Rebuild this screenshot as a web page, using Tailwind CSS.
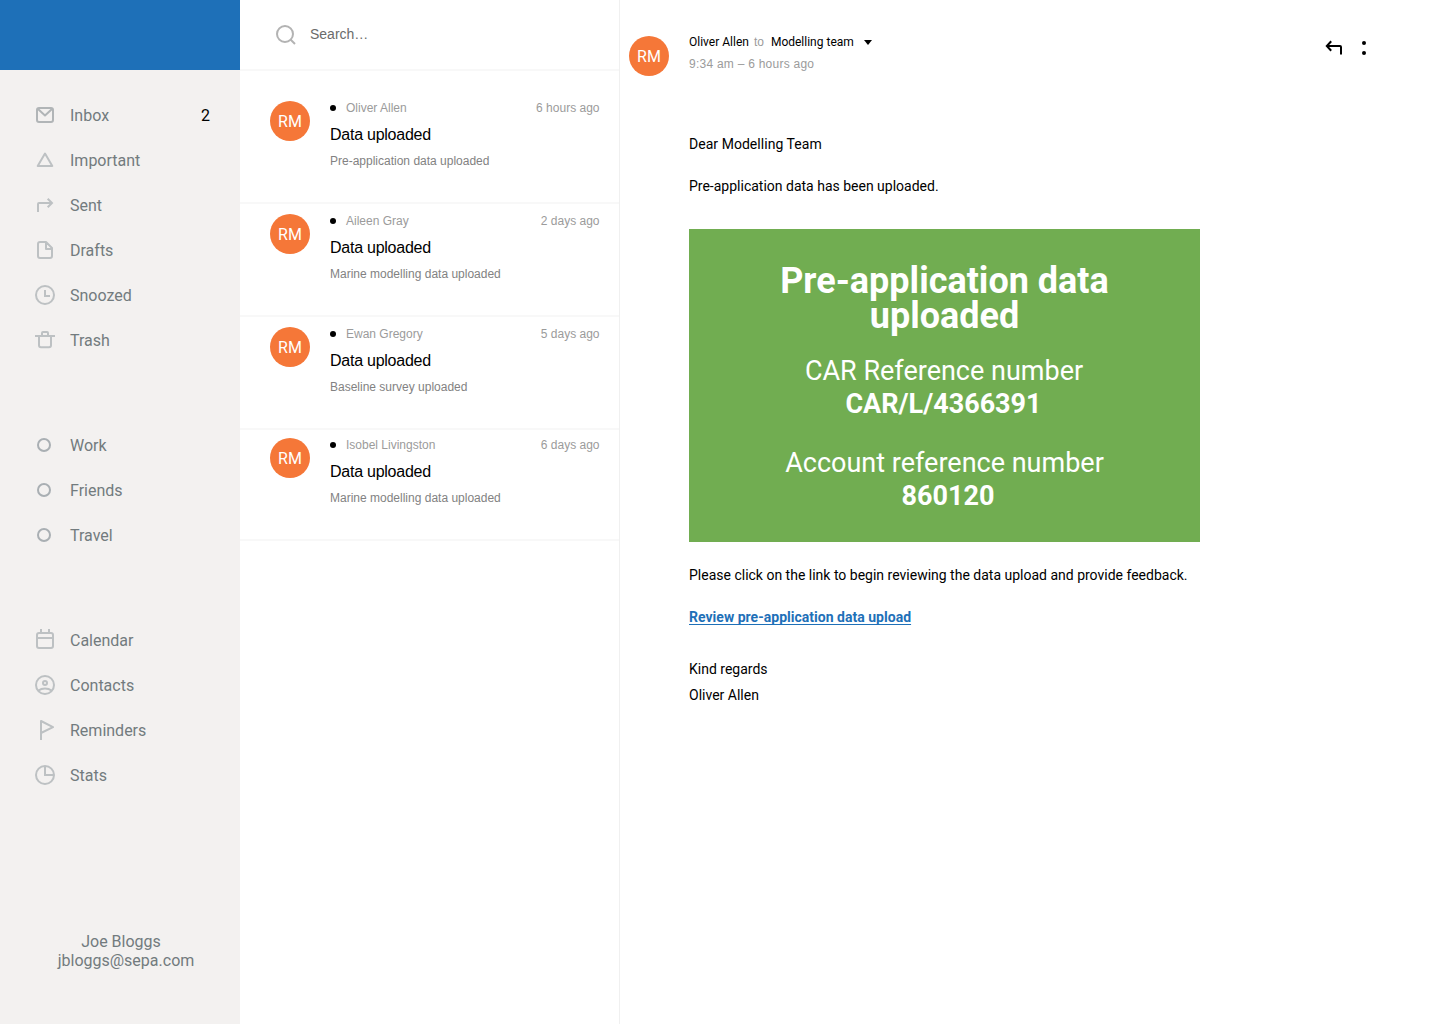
<!DOCTYPE html>
<html lang="en">
<head>
<meta charset="utf-8">
<title>Mail</title>
<script src="https://cdn.jsdelivr.net/npm/@tailwindcss/browser@4"></script>
</head>
<body class="h-[1027px] overflow-hidden bg-white font-['Roboto',sans-serif] text-black">
<div class="flex h-[1024px] w-[1440px]">

  <!-- Sidebar -->
  <aside class="flex w-60 shrink-0 flex-col bg-[#f3f1f0] text-base text-[#727b7e]">
    <div class="h-[70px] shrink-0 bg-[#1e70b8]"></div>
    <nav class="flex flex-col pt-[23px]">
      <a class="flex h-[45px] items-center pl-[35px] pr-[30px]">
        <svg class="-mt-px mr-[15px] size-5 overflow-visible text-[#b1b5b7]" viewBox="0 0 20 20" fill="none" stroke="currentColor" stroke-width="2" stroke-linejoin="round"><rect x="2" y="3" width="16" height="14" rx="2"/><path d="M3 4l7 6.5L17 4"/></svg>
        <span class="grow">Inbox</span><span class="text-black">2</span>
      </a>
      <a class="flex h-[45px] items-center pl-[35px]">
        <svg class="-mt-px mr-[15px] size-5 overflow-visible text-[#bdc1c3]" viewBox="0 0 20 20" fill="none" stroke="currentColor" stroke-width="2" stroke-linejoin="round"><path d="M10 3.6L17.3 16H2.7z"/></svg>
        <span>Important</span>
      </a>
      <a class="flex h-[45px] items-center pl-[35px]">
        <svg class="-mt-px mr-[15px] size-5 overflow-visible text-[#bdc1c3]" viewBox="0 0 20 20" fill="none" stroke="currentColor" stroke-width="2"><path d="M3 17V9a1 1 0 0 1 1-1h13M12.7 3.7L17 8l-4.3 4.3"/></svg>
        <span>Sent</span>
      </a>
      <a class="flex h-[45px] items-center pl-[35px]">
        <svg class="-mt-px mr-[15px] size-5 overflow-visible text-[#bdc1c3]" viewBox="0 0 20 20" fill="none" stroke="currentColor" stroke-width="2" stroke-linejoin="round"><path d="M5 2H11l6 6v8a2 2 0 0 1-2 2H5a2 2 0 0 1-2-2V4a2 2 0 0 1 2-2zM11 2v7h6"/></svg>
        <span>Drafts</span>
      </a>
      <a class="flex h-[45px] items-center pl-[35px]">
        <svg class="-mt-px mr-[15px] size-5 overflow-visible text-[#bdc1c3]" viewBox="0 0 20 20" fill="none" stroke="currentColor" stroke-width="2"><circle cx="10" cy="10" r="9"/><path d="M10 5v6h5"/></svg>
        <span>Snoozed</span>
      </a>
      <a class="flex h-[45px] items-center pl-[35px]">
        <svg class="-mt-px mr-[15px] size-5 overflow-visible text-[#bdc1c3]" viewBox="0 0 20 20" fill="none" stroke="currentColor" stroke-width="2"><path d="M0 6h20M4 6v9.300A2 2 0 0 0 6 17.300h8a2 2 0 0 0 2-2V6M7 6V3a1 1 0 0 1 1-1h4a1 1 0 0 1 1 1v3"/></svg>
        <span>Trash</span>
      </a>
    </nav>
    <nav class="mt-[60px] flex flex-col">
      <a class="flex h-[45px] items-center pl-[37px]"><span class="-mt-px mr-[19px] size-3.5 rounded-full border-2 border-[#a9afb3]"></span><span>Work</span></a>
      <a class="flex h-[45px] items-center pl-[37px]"><span class="-mt-px mr-[19px] size-3.5 rounded-full border-2 border-[#a9afb3]"></span><span>Friends</span></a>
      <a class="flex h-[45px] items-center pl-[37px]"><span class="-mt-px mr-[19px] size-3.5 rounded-full border-2 border-[#a9afb3]"></span><span>Travel</span></a>
    </nav>
    <nav class="mt-[60px] flex flex-col">
      <a class="flex h-[45px] items-center pl-[35px]">
        <svg class="-mt-px mr-[15px] size-5 overflow-visible text-[#bdc1c3]" viewBox="0 0 20 20" fill="none" stroke="currentColor" stroke-width="2"><rect x="2" y="3" width="16" height="15" rx="2"/><path d="M2 8h16M6-1v4M14-1v4"/></svg>
        <span>Calendar</span>
      </a>
      <a class="flex h-[45px] items-center pl-[35px]">
        <svg class="-mt-px mr-[15px] size-5 overflow-visible text-[#bdc1c3]" viewBox="0 0 20 20" fill="none" stroke="currentColor" stroke-width="2"><circle cx="10" cy="10" r="9"/><circle cx="10" cy="8" r="2"/><path d="M3.500 15.500c3.500-2.700 9.500-2.700 13 0"/></svg>
        <span>Contacts</span>
      </a>
      <a class="flex h-[45px] items-center pl-[35px]">
        <svg class="-mt-px mr-[15px] size-5 overflow-visible text-[#bdc1c3]" viewBox="0 0 20 20" fill="none" stroke="currentColor" stroke-width="2" stroke-linejoin="round"><path d="M6 20V1l12 6.200L6 13"/></svg>
        <span>Reminders</span>
      </a>
      <a class="flex h-[45px] items-center pl-[35px]">
        <svg class="-mt-px mr-[15px] size-5 overflow-visible text-[#bdc1c3]" viewBox="0 0 20 20" fill="none" stroke="currentColor" stroke-width="2"><circle cx="10" cy="10" r="9"/><path d="M10 1v9h9"/></svg>
        <span>Stats</span>
      </a>
    </nav>
    <div class="mt-auto pb-[54px] text-center leading-[19px]">
      <p class="pl-0.5">Joe Bloggs</p>
      <p class="pl-3">jbloggs@sepa.com</p>
    </div>
  </aside>

  <!-- Message list -->
  <section class="w-[380px] shrink-0 border-r border-[#f0f0f0] font-['Liberation_Sans',sans-serif]">
    <div class="flex h-[71px] items-center border-b-2 border-[#f8f8f8] pl-[35px] text-sm text-[#6b6b6b]">
      <svg class="mr-[13px] mt-px h-[22px] w-[22px] text-[#b3b3b3]" viewBox="0 0 22 22" fill="none" stroke="currentColor" stroke-width="2"><circle cx="10" cy="10" r="8"/><path d="M15.500 15.500l4.500 4.500"/></svg>
      <span class="pb-0.5">Search…</span>
    </div>
    <article class="flex h-[133px] border-b-2 border-[#f8f8f8] pl-[30px] pr-[19.5px] pt-[30px]">
      <div class="mr-5 flex size-10 shrink-0 items-center justify-center rounded-full bg-[#f57738] pt-0.5 font-['Roboto',sans-serif] text-base text-white">RM</div>
      <div class="-mt-px grow text-xs text-[#828282]">
        <div class="flex items-center text-[#9b9b9b]"><i class="mr-2.5 size-1.5 rounded-full bg-black"></i><span class="grow">Oliver Allen</span><span>6 hours ago</span></div>
        <h2 class="mt-[9px] text-base leading-5 tracking-[-0.25px] text-black">Data uploaded</h2>
        <p class="mt-2">Pre-application data uploaded</p>
      </div>
    </article>
    <article class="flex h-[113px] border-b-2 border-[#f8f8f8] pl-[30px] pr-[19.5px] pt-2.5">
      <div class="mr-5 flex size-10 shrink-0 items-center justify-center rounded-full bg-[#f57738] pt-0.5 font-['Roboto',sans-serif] text-base text-white">RM</div>
      <div class="-mt-px grow text-xs text-[#828282]">
        <div class="flex items-center text-[#9b9b9b]"><i class="mr-2.5 size-1.5 rounded-full bg-black"></i><span class="grow">Aileen Gray</span><span>2 days ago</span></div>
        <h2 class="mt-[9px] text-base leading-5 tracking-[-0.25px] text-black">Data uploaded</h2>
        <p class="mt-2">Marine modelling data uploaded</p>
      </div>
    </article>
    <article class="flex h-[113px] border-b-2 border-[#f8f8f8] pl-[30px] pr-[19.5px] pt-2.5">
      <div class="mr-5 flex size-10 shrink-0 items-center justify-center rounded-full bg-[#f57738] pt-0.5 font-['Roboto',sans-serif] text-base text-white">RM</div>
      <div class="-mt-px grow text-xs text-[#828282]">
        <div class="flex items-center text-[#9b9b9b]"><i class="mr-2.5 size-1.5 rounded-full bg-black"></i><span class="grow">Ewan Gregory</span><span>5 days ago</span></div>
        <h2 class="mt-[9px] text-base leading-5 tracking-[-0.25px] text-black">Data uploaded</h2>
        <p class="mt-2">Baseline survey uploaded</p>
      </div>
    </article>
    <article class="flex h-[111px] border-b-2 border-[#f8f8f8] pl-[30px] pr-[19.5px] pt-2">
      <div class="mr-5 flex size-10 shrink-0 items-center justify-center rounded-full bg-[#f57738] pt-0.5 font-['Roboto',sans-serif] text-base text-white">RM</div>
      <div class="-mt-px grow text-xs text-[#828282]">
        <div class="flex items-center text-[#9b9b9b]"><i class="mr-2.5 size-1.5 rounded-full bg-black"></i><span class="grow">Isobel Livingston</span><span>6 days ago</span></div>
        <h2 class="mt-[9px] text-base leading-5 tracking-[-0.25px] text-black">Data uploaded</h2>
        <p class="mt-2">Marine modelling data uploaded</p>
      </div>
    </article>
  </section>

  <!-- Open message -->
  <main class="flex grow flex-col">
    <header class="flex pl-[9px] pr-[74px] pt-[34px]">
      <div class="mr-5 mt-0.5 flex size-10 items-center justify-center rounded-full bg-[#f57738] pt-0.5 text-base text-white">RM</div>
      <div class="grow text-xs">
        <div class="flex items-center">
          <span>Oliver Allen</span><span class="ml-[5px] mr-[7px] font-['Liberation_Sans',sans-serif] text-[#9b9b9b]">to</span><span>Modelling team</span>
          <svg class="ml-2.5 mt-px h-[5px] w-2" viewBox="0 0 8 5"><path d="M0 0h8L4 5z"/></svg>
        </div>
        <p class="mt-1.5 font-['Liberation_Sans',sans-serif] tracking-[0.245px] text-[#9b9b9b]">9:34 am – 6 hours ago</p>
      </div>
      <svg class="mt-[5px] h-4 w-[18px]" viewBox="0 0 18 16" fill="none" stroke="#000" stroke-width="2"><path d="M2 7h13a1 1 0 0 1 1 1v7.500M6.200 2.200L1.800 7l4.400 4.800"/></svg>
      <div class="ml-[19px] mt-[7px] flex h-3.5 w-1 flex-col justify-between"><i class="size-1 rounded-full bg-black"></i><i class="size-1 rounded-full bg-black"></i></div>
    </header>
    <div class="ml-[69px] mt-[58px] w-[511px] text-sm">
      <p class="tracking-[0.04px]">Dear Modelling Team</p>
      <p class="mt-[22px]">Pre-application data has been uploaded.</p>
      <div class="mt-[33px] flex h-[313px] flex-col bg-[#71ad51] pt-[35px] text-center text-[27px] leading-[33px] text-white">
        <h1 class="text-4xl font-bold leading-[35px]">Pre-application data<br>uploaded</h1>
        <p class="mt-[21px] pr-px">CAR Reference number</p>
        <p class="pr-0.5 font-bold">CAR/L/4366391</p>
        <p class="mt-[26px]">Account reference number</p>
        <p class="pl-[7px] font-bold">860120</p>
      </div>
      <p class="mt-[23px]">Please click on the link to begin reviewing the data upload and provide feedback.</p>
      <p class="mt-[22px]"><a class="font-bold tracking-[0.02px] text-[#1e70b8] underline decoration-1 underline-offset-2 [text-decoration-skip-ink:none]">Review pre-application data upload</a></p>
      <p class="mt-8">Kind regards</p>
      <p class="mt-1.5">Oliver Allen</p>
    </div>
  </main>
</div>
</body>
</html>
